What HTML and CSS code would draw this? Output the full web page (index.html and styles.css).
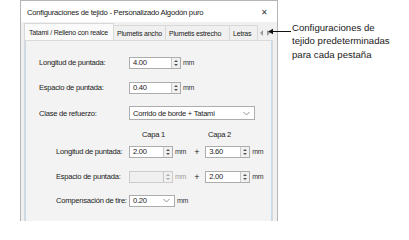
FILE: index.html
```html
<!DOCTYPE html>
<html lang="es">
<head>
<meta charset="utf-8">
<title>Configuraciones de tejido</title>
<link rel="stylesheet" href="styles.css">
</head>
<body>
<div class="stage">
  <div class="dialog">
    <div class="titlebar">
      <span class="title">Configuraciones de tejido - Personalizado Algodón puro</span>
      <span class="close">✕</span>
    </div>
    <div class="dbody">
      <div class="tabs">
        <div class="tab active t1">Tatami / Relleno con realce</div>
        <div class="tab t2">Plumetis ancho</div>
        <div class="tab t3">Plumetis estrecho</div>
        <div class="tab t4">Letras</div>
        <div class="tabscroll">
          <svg width="12" height="8" viewBox="0 0 12 8"><path d="M4 1 L1 4 L4 7 Z" fill="#9a9a9a"/><path d="M8 1 L11 4 L8 7 Z" fill="#9a9a9a"/></svg>
        </div>
      </div>
      <div class="panel">
        <div class="row r1">
          <span class="lbl">Longitud de puntada:</span>
          <span class="spin w50"><span class="val">4.00</span><span class="arrows"><i class="up"></i><i class="dn"></i></span></span>
          <span class="unit">mm</span>
        </div>
        <div class="row r2">
          <span class="lbl">Espacio de puntada:</span>
          <span class="spin w50"><span class="val">0.40</span><span class="arrows"><i class="up"></i><i class="dn"></i></span></span>
          <span class="unit">mm</span>
        </div>
        <div class="row r3">
          <span class="lbl">Clase de refuerzo:</span>
          <span class="combo w126"><span class="val">Corrido de borde + Tatami</span><svg class="chev" width="7" height="5" viewBox="0 0 7 5"><path d="M0.5 1 L3.5 4 L6.5 1" fill="none" stroke="#777" stroke-width="0.8"/></svg></span>
        </div>
        <div class="row caps">
          <span class="cap c1">Capa 1</span>
          <span class="cap c2">Capa 2</span>
        </div>
        <div class="row sub r4">
          <span class="lbl">Longitud de puntada:</span>
          <span class="spin w43"><span class="val">2.00</span><span class="arrows"><i class="up"></i><i class="dn"></i></span></span>
          <span class="unit">mm</span>
          <span class="plus">+</span>
          <span class="spin w44"><span class="val">3.60</span><span class="arrows"><i class="up"></i><i class="dn"></i></span></span>
          <span class="unit">mm</span>
        </div>
        <div class="row sub r5">
          <span class="lbl">Espacio de puntada:</span>
          <span class="spin w43 disabled"><span class="val"></span><span class="arrows"><i class="up"></i><i class="dn"></i></span></span>
          <span class="unit dim">mm</span>
          <span class="plus">+</span>
          <span class="spin w44"><span class="val">2.00</span><span class="arrows"><i class="up"></i><i class="dn"></i></span></span>
          <span class="unit">mm</span>
        </div>
        <div class="row sub r6">
          <span class="lbl">Compensación de tire:</span>
          <span class="combo edit"><span class="val">0.20</span><svg class="chev" width="7" height="5" viewBox="0 0 7 5"><path d="M0.5 1 L3.5 4 L6.5 1" fill="none" stroke="#777" stroke-width="0.8"/></svg></span>
          <span class="unit">mm</span>
        </div>
      </div>
    </div>
  </div>
  <div class="note">Configuraciones de<br>tejido predeterminadas<br>para cada pestaña</div>
  <svg class="pointer" width="24" height="7" viewBox="0 0 24 7"><path d="M0 3.5 L5 0.8 L5 6.2 Z" fill="#111"/><path d="M4 3.5 H23" stroke="#111" stroke-width="1"/></svg>
</div>
</body>
</html>
```
FILE: styles.css
```css
* { box-sizing: border-box; }
html, body { margin: 0; padding: 0; background: #fff; }
body { width: 409px; height: 222px; overflow: hidden; font-family: "Liberation Sans", Arial, sans-serif; color: #1a1a1a; }

.stage { position: relative; display: flex; align-items: flex-start; height: 222px; }

.dialog {
  margin-left: 20px;
  width: 258px;
  height: 221px;
  border: 1px solid #b5b5b5;
  border-bottom: none;
  background: #f0f0f0;
  display: flex;
  flex-direction: column;
  letter-spacing: -0.25px;
}
.titlebar {
  height: 21px;
  background: #fff;
  display: flex;
  align-items: center;
  padding: 2px 0 0 6px;
  font-size: 7.7px;
}
.title { flex: 1; }
.close { width: 22px; text-align: center; font-size: 8px; color: #333; padding-right: 4px; letter-spacing: 0; }

.dbody { flex: 1; padding: 1px 4px 0 3px; display: flex; flex-direction: column; }

.tabs { display: flex; align-items: flex-end; height: 17px; font-size: 7px; letter-spacing: -0.2px; }
.tab {
  height: 15px;
  padding: 0 0 0 3px;
  display: flex;
  align-items: center;
  border: 1px solid #d9d9d9;
  border-bottom: none;
  border-left: none;
  background: #f0f0f0;
  white-space: nowrap;
  overflow: hidden;
}
.tab.active {
  height: 17px;
  padding-left: 4px;
  border-left: 1px solid #d9d9d9;
  background: #fafafa;
}
.t1 { width: 90px; }
.t2 { width: 52px; }
.t3 { width: 64px; }
.t4 { width: 28px; }
.tabscroll { height: 15px; display: flex; align-items: center; padding-left: 1px; }

.panel {
  flex: 1;
  border: 1px solid #d9d9d9;
  border-bottom: none;
  background: #f3f3f3;
  box-shadow: inset 1px 0 0 #c7dbef, inset -1px 0 0 #c7dbef;
  padding-left: 14px;
  font-size: 7.6px;
}

.row { display: flex; align-items: center; height: 13px; }
.r1 { margin-top: 15px; }
.r2 { margin-top: 12px; }
.r3 { margin-top: 12px; height: 14px; }
.caps { margin-top: 9px; height: 10px; }
.r4 { margin-top: 6px; }
.r5 { margin-top: 12px; }
.r6 { margin-top: 11px; }

.lbl { width: 90px; white-space: nowrap; }
.sub .lbl { width: 73px; margin-left: 17px; }

.cap.c1 { margin-left: 103px; }
.cap.c2 { margin-left: 43px; }

.spin { display: flex; height: 12px; border: 1px solid #adadad; background: #fff; }
.spin .val { flex: 1; padding-left: 3px; line-height: 10px; }
.spin .arrows { width: 9px; border-left: 1px solid #c8c8c8; background: #f0f0f0; display: flex; flex-direction: column; justify-content: center; align-items: center; gap: 2px; }
.arrows i { display: block; width: 0; height: 0; border-left: 2px solid transparent; border-right: 2px solid transparent; }
.arrows i.up { border-bottom: 2px solid #555; }
.arrows i.dn { border-top: 2px solid #555; }
.spin.disabled { background: #f0f0f0; border-color: #cccccc; }
.spin.disabled .arrows i.up { border-bottom-color: #aaa; }
.spin.disabled .arrows i.dn { border-top-color: #aaa; }

.w50 { width: 52px; }
.w43 { width: 44px; }
.w44 { width: 45px; }
.w126 { width: 126px; }

.unit { margin-left: 2px; font-size: 7px; color: #333; }
.unit.dim { color: #a0a0a0; }
.plus { margin-left: 8px; width: 11px; font-size: 9px; }

.combo { display: flex; align-items: center; height: 14px; border: 1px solid #adadad; background: #fff; padding: 0 4px 0 3px; }
.combo .val { flex: 1; }
.combo.edit { height: 12px; width: 46px; }

.note {
  margin-left: 14px;
  margin-top: 21px;
  font-size: 9.6px;
  line-height: 13.4px;
  color: #1a1a1a;
}
.pointer { position: absolute; left: 268px; top: 28px; }
```
